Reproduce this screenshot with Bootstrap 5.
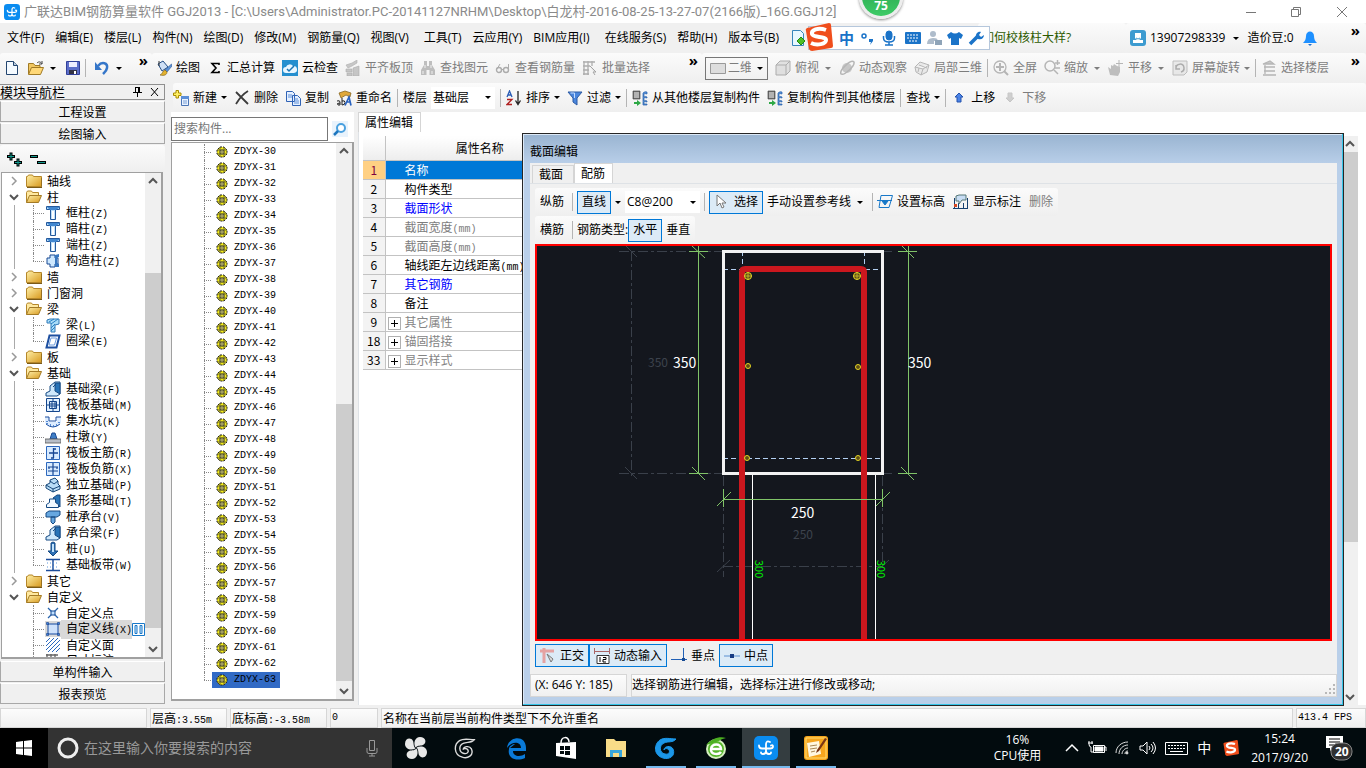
<!DOCTYPE html>
<html lang="zh-CN">
<head>
<meta charset="utf-8">
<meta name="viewport" content="width=device-width, initial-scale=1">
<title>广联达BIM钢筋算量软件 GGJ2013</title>
<link href="https://cdn.jsdelivr.net/npm/bootstrap@5.3.0/dist/css/bootstrap.min.css" rel="stylesheet">
<style>
:root{--ui:"Open Sans","Noto Sans CJK SC",sans-serif;--song:"Noto Sans CJK SC","Liberation Sans",sans-serif;--mono:"Liberation Mono","Noto Sans CJK SC",monospace}
body{font:12px/16px var(--ui);color:#000;background:#f0f0f0;height:100vh;min-height:600px;overflow:hidden}
button,input,select{font:inherit;color:inherit}
a{color:inherit;text-decoration:none}
svg{flex:none;display:block}
.ico{width:16px;height:16px}
.titlebar{height:23px;background:#fff;color:#8a8a8a;font:13px/22px Roboto,"Noto Sans CJK SC",sans-serif}
.menubar,.toolrow{height:30px}
.menubar{padding-left:7px;gap:11px}
.strip{background:linear-gradient(#fbfbfb,#efefef);border-radius:3px}
.tool{display:inline-flex;align-items:center;gap:4px;padding:0;border:0;background:none;white-space:nowrap;flex:none}
.tool:disabled,.dim{color:#7d7d7d}
.tool:disabled svg{filter:grayscale(1);opacity:.5}
.drop-mark{width:0;height:0;border:3px solid transparent;border-top-color:currentColor;border-bottom:0;margin:0 1px 0 2px;flex:none}
.vsep{width:1px;height:18px;background:#b4b4b4;flex:none}
.tight .vsep{margin:0 -2px}
.more{font-size:15px;line-height:14px;font-weight:700;align-self:flex-start;padding:0 6px 0 0;border:0;background:none}
.pick{appearance:none;border:0;border-radius:0;height:22px;padding:0 16px 0 2px;line-height:20px;background:#fff url("data:image/svg+xml,%3Csvg xmlns='http://www.w3.org/2000/svg' width='6' height='3'%3E%3Cpath d='M0 0h6L3 3z'/%3E%3C/svg%3E") no-repeat right 4px center}
.view-box{border:1px solid #777;height:23px}
.view-box .pick{height:20px;width:41px;background-color:transparent}
.side{width:165px}
.side-head{height:16px;margin:1px 0;border:1px solid #8f8f8f;border-left:0;font:13px/14px var(--song)}
.side-btn{height:21px;margin-bottom:1px;border:1px solid #a8a8a8;border-top-color:#fff;background:#f0f0f0;font:12px/18px var(--song);padding:0;flex:none}
.sunken{background:#fff;border:2px solid #a0a0a0;border-top-width:1px;border-left-width:1px;min-height:0}
.nav-box{margin:0 2px 2px 1px}
.tree-row{height:16px;line-height:16px;font-family:var(--song);white-space:nowrap;position:relative}
.tree-row .key{font:10px/16px var(--mono)}
.tree-row .twist{width:10px;height:10px;margin-left:7px;margin-right:7px}
.tree-row.leaf{padding-left:31px}
.tree-row.leaf::before{content:"";width:11px;border-top:1px dotted #888;flex:none;margin-right:1px}
.tree-row.leaf::after{content:"";position:absolute;left:31px;top:0;bottom:0;border-left:1px dotted #888}
.tree-row.leaf.final::after{bottom:8px}
.tree-row.leaf.inner{background:linear-gradient(#aaa,#aaa) 12px 0/1px 100% no-repeat}
.tree-row .label{padding-left:5px}
.tree-row.current .label,.tree-row.current svg.ico{background:#d9d9d9}
.sbar{width:16px;background:#f0f0f0;flex:none}
.sbar button{height:16px;border:0;background:none;padding:0 3px;flex:none}
.sbar i{background:#cdcdcd}
.list-pane{width:185px}
.list-pane>*{margin-left:2px}
.code-list{padding-top:1px}
.code-row{height:16px;padding-left:32px;font:10px/16px var(--mono);white-space:nowrap;position:relative}
.code-row::before{content:"";width:7px;border-top:1px dotted #888;margin-right:1px;flex:none}
.code-row::after{content:"";position:absolute;left:32px;top:0;bottom:0;border-left:1px dotted #888}
.code-row:last-child::after{bottom:8px}
.code-row .pill{height:16px;padding:0 4px;gap:6px}
.code-row.current .pill{background:#316ac5}
.search-row{height:30px;padding:4px 0 1px}
.search-box{width:157px;height:24px;border:1px solid #777;background:#fff;padding:0 2px}
.search-box::placeholder{color:#777}
.sheet{font-family:var(--song);width:212px;table-layout:fixed;margin:0}
.sheet th,.sheet td{height:19px;padding:0;border:1px solid #c3c3c3;border-width:0 1px 1px 0;font-weight:400;line-height:18px;white-space:nowrap}
.sheet thead th{height:24px;background:linear-gradient(#fff,#ededed)}
.sheet tbody th{background:#f3f3f3}
.sheet td{padding-left:19px}
.sheet td .num{line-height:10px}
.sheet .linked{color:#00f}
.sheet .chosen td{background:#0078d7;color:#fff}
.sheet .chosen th{background:#ffd083;color:#800040}
.sheet .group{padding-left:2px;color:#848484}
.expander{width:13px;height:13px;border:1px solid #b0b0b0;background:#fff;padding:1px;margin-right:4px}
.page-tab{border:1px solid #d5d5d5;border-bottom:0;background:#fff;padding:0 7px 0 6px;height:20px;white-space:nowrap}
.page-tab.idle{background:#f0f0f0;height:18px;padding-right:10px}
.editor{left:353px;right:22px;top:50px;bottom:-1px;border:1px solid #262626;background:linear-gradient(#99b4d1,#b9cfe9 30px);padding:0 6px 8px 7px;box-shadow:inset -1px -1px #35c5e8,inset 1px 1px #dce9f7}
.editor-title{height:29px;padding:10px 0 0}
.editor-body{background:#f0f0f0;min-height:0}
.editor-work{padding:0 5px;min-height:0}
.editor-work .strip{height:28px;gap:4px;padding:0 5px}
.on{border:1px solid #0078d7;background:#dcebf7;height:23px;padding:0 4px}
.canvas{border:2px solid #f00;background:#14171e;min-height:0;overflow:hidden}
.canvas text{font-family:"Noto Sans CJK SC",sans-serif}
.cell{border:1px solid #d6d6d6;background:linear-gradient(#fcfcfc,#f0f0f0);white-space:nowrap;overflow:hidden}
.statusbar{height:23px;padding-top:3px;font-family:var(--song);gap:3px}
.statusbar .cell{padding:0 1px;line-height:18px}
.num{font:10px/18px var(--mono)}
.taskbar{height:40px;background:#020b0e;color:#fff}
.start{width:48px;background:#000;border:0;padding:0 16px}
.ask{width:344px;background:#333;padding:0 14px 0 9px;gap:5px}
.ask input{background:none;border:0;color:#999;font-size:14px;outline:0}
.ask input::placeholder{color:#999;opacity:1}
.apps{gap:2px}
.app{width:48px;border:0;background:none;padding:0 12px;position:relative}
.app.running::after{content:"";position:absolute;left:4px;right:4px;bottom:0;height:2px;background:#76b9ed}
.app.active{background:#343d40}
.app.active::after{left:0;right:0}
.tray{gap:8px}
.tray button{border:0;background:none;padding:0;color:#fff}
.ime{top:26px;left:808px;width:182px;height:24px;background:#fff;border:1px solid #b5c7dc;padding-left:30px;gap:5px;z-index:5;color:#1a73c8}
.ime-logo{left:-4px;top:-4px}
.ball{left:859px;top:-18px;width:44px;height:37px;border-radius:0 0 22px 22px;overflow:hidden;z-index:6;background:linear-gradient(#29a04c,#3dcb66);border:3px solid #ededed;border-top:0;box-shadow:0 1px 3px #888;color:#fff;font-weight:700;line-height:14px;padding-top:17px}
</style>
</head>
<body class="d-flex flex-column">

<svg width="0" height="0" class="position-absolute" aria-hidden="true">
<defs>
<linearGradient id="gold" x2="1" y2="1"><stop stop-color="#fff0a8"/><stop offset="1" stop-color="#d89a20"/></linearGradient>
<symbol id="brand" viewBox="0 0 24 24"><rect width="24" height="24" rx="5" fill="#0a8cf0"/><path d="M16 6q-3.500-2-4 2v7q0 3-3 3-2 0-2-1.500M12 15q0 3 3 3 2 0 2-1.500M5 9.500q0 3 3 3h8q3 0 3-2t-2-1" fill="none" stroke="#fff" stroke-width="1.800" stroke-linecap="round"/></symbol>
<symbol id="new" viewBox="0 0 16 16"><path d="M2.500 1.500h7l4 4v9h-11z" fill="#f4faff" stroke="#23456f"/><path d="M9.500 1.500v4h4" fill="#bcd" stroke="#23456f"/></symbol>
<symbol id="open" viewBox="0 0 16 16"><path d="M.5 14V3.500h5l1.500 2h5V8" fill="#f1c761" stroke="#a07a25"/><path d="M.5 14.500L3.500 7.500H15.500l-3 7z" fill="#ffd877" stroke="#a07a25"/><path d="M9 3c2-2 4-1 5 1m0-3v3h-3" fill="none" stroke="#444"/></symbol>
<symbol id="save" viewBox="0 0 16 16"><path d="M1.500 1.500h13v13h-13z" fill="#5c6ec9" stroke="#31409a"/><path d="M4 2h8v5H4z" fill="#eef"/><path d="M4 10h8v4H4z" fill="#334"/><path d="M9 11h2v3H9z" fill="#fff"/></symbol>
<symbol id="undo" viewBox="0 0 16 16"><path d="M4 6c4-5 10-3 9 2-.5 3-2 4-4 6" fill="none" stroke="#3576c9" stroke-width="2.500"/><path d="M1 2v8h7z" fill="#3576c9"/></symbol>
<symbol id="paint" viewBox="0 0 16 16"><path d="M2 4l5-3 5 6-6 4z" fill="#cfe0f5" stroke="#234d86"/><path d="M3 1v5" stroke="#333"/><path d="M15.500 4L9 10l2 2 5-6z" fill="#5a91d8" stroke="#29548e" stroke-width=".6"/><path d="M9 10c-3 1-2 4-5 5 4 1 7 0 7-3z" fill="#e4b32f" stroke="#7a5c15" stroke-width=".6"/></symbol>
<symbol id="sum" viewBox="0 0 12 16"><path d="M10 5V3.500H3L7 8l-4 4.500h7V11" fill="none" stroke="#000" stroke-width="1.600"/></symbol>
<symbol id="cloud" viewBox="0 0 16 16"><path d="M0 0h16v16H0z" fill="#258fcf"/><path d="M4 13a3 3 0 0 1 0-6 4 4 0 0 1 7-1 3.500 3.500 0 0 1 1 7z" fill="#e8f6ff"/><path d="M5 9l2 2 5-5" fill="none" stroke="#1b76b5" stroke-width="1.500"/></symbol>
<symbol id="slab" viewBox="0 0 16 16"><path d="M1 5l6-2 5-3v3l-5 3-4 2zM1 9h6v3H1zM2 13h5v3H2zM8 8l6-2v10H8z" fill="#999" stroke="#666" stroke-width=".6"/></symbol>
<symbol id="bino" viewBox="0 0 16 16"><path d="M4 1h3v5h2V1h3v4l3 5v5H9.500v-5h-3v5H1v-5l3-5z" fill="#888"/><path d="M3 11v3M5 5v3M11 5v3M12 11v3" stroke="#eee"/></symbol>
<symbol id="glass" viewBox="0 0 16 16"><circle cx="4" cy="10" r="2.500" fill="none" stroke="#666" stroke-width="1.400"/><circle cx="11" cy="10" r="2.500" fill="none" stroke="#666" stroke-width="1.400"/><path d="M2 9l3-5M13.500 10V4M6.500 9.500h2" stroke="#666" fill="none"/></symbol>
<symbol id="grid" viewBox="0 0 16 16"><path d="M1 2h12M1 6h7M1 10h6M1 14h6M2 1v14M6 1v14M10 1v5" stroke="#666" stroke-width="1.300"/><path d="M8 6l6 6h-3l2 3" fill="#ddd" stroke="#555"/></symbol>
<symbol id="rect" viewBox="0 0 16 16"><path d="M.5 3.500h15v10H.5z" fill="#ddd" stroke="#999"/></symbol>
<symbol id="cube" viewBox="0 0 16 16"><path d="M1 5l4-4h10v10l-4 4H1zM1 5h10v10M11 5l4-4" fill="#ccc" stroke="#666"/></symbol>
<symbol id="orbit" viewBox="0 0 16 16"><circle cx="8" cy="8" r="5" fill="#999"/><path d="M2 14C0 10 12-1 15 2 16 6 5 16 2 14z" fill="none" stroke="#777" stroke-width="1.500"/></symbol>
<symbol id="local" viewBox="0 0 16 16"><path d="M1 7l5-5 9 3-2 7-6 3-5-3zM1 7l8 2 6-4M9 9l-2 6M5 5l8 3M5 8l-1 4" fill="#ddd" stroke="#777"/></symbol>
<symbol id="full" viewBox="0 0 16 16"><circle cx="7" cy="7" r="6" fill="none" stroke="#777" stroke-width="1.300"/><path d="M7 3v8M3 7h8M11 11l4 4" stroke="#777" stroke-width="2"/></symbol>
<symbol id="zoomi" viewBox="0 0 16 16"><circle cx="6" cy="6" r="5" fill="none" stroke="#777" stroke-width="1.500"/><path d="M10 10l4 4M11 3h5M13.500 0v5M11 8h5" stroke="#777" stroke-width="1.500"/></symbol>
<symbol id="hand" viewBox="0 0 16 16"><path d="M2 15L0 7l3 2V5l2 1 1-2 3 2 3 1v5l-2 4z" fill="#888"/><path d="M11 0v7M8 3.500h7" stroke="#777"/></symbol>
<symbol id="spin" viewBox="0 0 16 16"><path d="M1 1h14v11l-3 3H1z" fill="#ddd" stroke="#888"/><path d="M4 8a4 4 0 1 1 5 4M4 5v4h4" fill="none" stroke="#666" stroke-width="1.500"/></symbol>
<symbol id="floor" viewBox="0 0 16 16"><path d="M2 4h11L9 1zM3 7h11M3 11h11M2 15h13M4 5v9" stroke="#777" fill="#999" stroke-width="1.300"/></symbol>
<symbol id="add" viewBox="0 0 16 16"><path d="M8.500 6.500h7v9h-7z" fill="#e9f2ff" stroke="#4a74b5"/><path d="M8 6h8v3H8z" fill="#5c8fd8"/><path d="M10 11h4M10 13h4" stroke="#7ba0d6"/><path d="M3 .5h2.500V3H8v2.500H5.500V8H3V5.500H.5V3H3z" fill="#fff066" stroke="#a98b00"/></symbol>
<symbol id="del" viewBox="0 0 16 16"><path d="M2 2l12 12M14 1C9 4 5 9 2 14" fill="none" stroke="#3b3b3b" stroke-width="1.800"/></symbol>
<symbol id="copy" viewBox="0 0 16 16"><path d="M1.500 1.500h6l2 2v8h-8zM7.500 5.500h5l3 3v7h-8z" fill="#e5f0ff" stroke="#2f62b5"/><path d="M3 5h4M3 7h4M9 9h4M9 11h5M9 13h5" stroke="#5f8fd8"/></symbol>
<symbol id="rename" viewBox="0 0 16 16"><path d="M3 3l6-2 6 2-1 4-4-2-5 3z" fill="#e0a83a" stroke="#7b5b18" stroke-width=".7"/><path d="M1 11q3-1 3 1v3H2q-2-2 2-2M6 8v7q3 0 3-2.500T6 11" stroke="#222" fill="none"/><path d="M9 15.500L13 7l2 8.500M11 12h3" stroke="#2a63c0" stroke-width="1.700" fill="none"/></symbol>
<symbol id="sort" viewBox="0 0 16 16"><path d="M1 7l2.500-6L6 7M2 5h3" stroke="#2a5cb5" fill="none" stroke-width="1.300"/><path d="M1 9.500h5l-5 5h5" stroke="#b02020" fill="none" stroke-width="1.300"/><path d="M12 1v12M9.500 10.500l2.500 4 2.500-4" stroke="#222" fill="none" stroke-width="1.300"/></symbol>
<symbol id="funnel" viewBox="0 0 16 16"><path d="M1 2h14L10 8v7l-4-3V8z" fill="#4a86dd" stroke="#2c5aa3"/><path d="M3.500 3h4v5" stroke="#c4dcff" fill="none"/></symbol>
<symbol id="floors" viewBox="0 0 16 16"><path d="M1 1h7v8H1z" fill="#777" stroke="#333" stroke-width=".6"/><path d="M2 3h5M2 5h5M2 7h5" stroke="#eee"/><path d="M11 3q2-2 4-1v2q-3-1-3 0v3q2-1 3 0v1q-3-1-3 0v3q2-1 3 0v1q-3-1-3 0v2h3v1h-4z" fill="#5c98e0" stroke="#235ba8" stroke-width=".7"/><path d="M2 12h3v-2l4 3-4 3v-2H2z" fill="#2da845"/></symbol>
<symbol id="up" viewBox="0 0 10 16"><path d="M5 3l4 4H7v5H3V7H1z" fill="#4b83e6" stroke="#2453ad"/></symbol>
<symbol id="down" viewBox="0 0 10 16"><path d="M5 12L1 8h2V3h4v5h2z" fill="#aaa" stroke="#999"/></symbol>
<symbol id="lens" viewBox="0 0 16 16"><path d="M0 0h16v16H0z" fill="#e9f3fc"/><circle cx="9" cy="7" r="4" fill="#fff" stroke="#49a0df" stroke-width="2"/><path d="M6 10l-4 4" stroke="#1d76bf" stroke-width="2.500"/></symbol>
<symbol id="user" viewBox="0 0 16 16"><rect width="16" height="16" rx="3" fill="#3d9bd0"/><path d="M5 3h6v5L9 10h4v3H3v-3h4L5 8z" fill="#fff"/><path d="M6 8q2 2 4 0" stroke="#3d9bd0" fill="none"/></symbol>
<symbol id="bell" viewBox="0 0 16 16"><path d="M1 13c2-2 3-4 3-7 0-6 8-6 8 0 0 3 1 5 3 7z" fill="#1e90ff"/><path d="M6 14h4l-2 2z" fill="#1e70d0"/></symbol>
<symbol id="tip" viewBox="0 0 16 16"><path d="M2.500.5h8l3 3v12h-11z" fill="#e8f7ff" stroke="#3785bb"/><path d="M11 7l4 4-4 4-4-4z" fill="#4fbf27" stroke="#248b0d"/></symbol>
<symbol id="folder" viewBox="0 0 16 16"><path d="M.5 3.500h1l1-1.500h4l1 1.500h8v10H.5z" fill="url(#gold)" stroke="#b5872a"/><path d="M1 14.500h15V5" fill="none" stroke="#7b5a17"/></symbol>
<symbol id="folder-open" viewBox="0 0 16 16"><path d="M.5 13.500V3.500l1-1.500h4l1 1.500h6V6" fill="#ffe9a0" stroke="#b5872a"/><path d="M.5 13.500l3-7h12l-3 7z" fill="url(#gold)" stroke="#a37a26"/></symbol>
<symbol id="column" viewBox="0 0 16 16"><path d="M1.500 1.500h13v3h-4v10h-5v-10h-4z" fill="#bfe0fb" stroke="#24599c"/><path d="M2 2h13l-4 3H5z" fill="#4187d0"/><path d="M8 6v8" stroke="#fff" stroke-width="2"/></symbol>
<symbol id="tie" viewBox="0 0 16 16"><path d="M5 2h5v3h3v6h-3v3H5v-3H2V5h3z" fill="#cde8ff" stroke="#1b4b93"/><path d="M10 2l4-1v3l-2 1v5l2 1v3h-4" fill="#3777c0"/></symbol>
<symbol id="beam" viewBox="0 0 16 16"><path d="M2 3l3-1h9v5l-4 1v7H6V6H2z" fill="#a9dcf8" stroke="#317ab8"/><path d="M4 5l5-3M6 7l7-5M6 11l4-4M6 14l4-4" stroke="#2c83c6"/></symbol>
<symbol id="ring" viewBox="0 0 16 16"><path d="M4.500 2.500h10l-3 12H1.500z" fill="#fff" stroke="#1d4fa0" stroke-width="2"/><path d="M6 5h5.500l-2 7H4z" fill="none" stroke="#6d9ce0"/></symbol>
<symbol id="footing" viewBox="0 0 16 16"><path d="M1 15v-3l4-2V5l5-4h5v12l-3 2z" fill="#cfe8fb" stroke="#164a83"/><path d="M10 2h5v11l-5-3zM8 6l3-3" fill="#2873b7" stroke="#164a83"/></symbol>
<symbol id="stripfoot" viewBox="0 0 16 16"><path d="M8 5l4-3h3v12l-3-3z" fill="#2873b7" stroke="#164a83"/><path d="M1.500 14.500v-3l3-2V6h6v3.500l3 2v3z" fill="#f0f8ff" stroke="#164a83"/></symbol>
<symbol id="raft" viewBox="0 0 16 16"><path d="M1.500 1.500h13v13h-13zM4.500 4.500h7v7h-7zM8 1v3M8 12v3M1 8h3M12 8h3M7 4v8M10 4v8M4 7h8M4 9h8" fill="#e0f0ff" stroke="#15468c"/></symbol>
<symbol id="pit" viewBox="0 0 16 16"><path d="M0 4h4v5h8V4h4v5q-1 5-8 5T0 9z" fill="#dcecff"/><path d="M0 4h4v4h7V4h5M1 11q7 6 14 0" fill="none" stroke="#1d4fa0"/><path d="M2 8v4M5 12h1M8 13h1M11 12h1M14 9v2" stroke="#2c6bc4" stroke-width="1.500" stroke-dasharray="1 1"/></symbol>
<symbol id="pier" viewBox="0 0 16 16"><path d="M7 4h3l2 6H5z" fill="#3e7dc4" stroke="#1b4b93"/><path d="M0 10h16v4H0z" fill="#b8bec7" stroke="#555" stroke-width=".8"/></symbol>
<symbol id="bars" viewBox="0 0 16 16"><path d="M1.500 1.500h13v13h-13z" fill="#d8ebff" stroke="#2d68bd"/><path d="M4 8h9M8.500 3v10M6 13h3M8 4h3" stroke="#164693" stroke-width="1.300"/></symbol>
<symbol id="bars2" viewBox="0 0 16 16"><path d="M1.500 1.500h13v13h-13z" fill="#d8ebff" stroke="#2d68bd"/><path d="M3 6h10M3 10h10M8 2v12M4 6v2M12 6v2" stroke="#164693" stroke-width="1.200"/></symbol>
<symbol id="iso" viewBox="0 0 16 16"><path d="M1 8l4-2V3l5-2 3 3v3l2 2v3l-7 3-7-4z" fill="#b8ddf7" stroke="#174779"/><path d="M1 8l7 4 7-3M8 12v3M5 4l4 3 4-3" stroke="#174779" fill="none"/></symbol>
<symbol id="cap" viewBox="0 0 16 16"><path d="M1 4l3-2h11v4l-3 2H1zM6 8h4v5l-2 2-2-2z" fill="#66a7e0" stroke="#164a83"/></symbol>
<symbol id="pile" viewBox="0 0 16 16"><path d="M6 2l2-1 2 1v8h3l-5 5-5-5h3z" fill="#2e70b5" stroke="#164a83"/><path d="M8 3v8" stroke="#c4e3fb" stroke-width="2"/></symbol>
<symbol id="strip" viewBox="0 0 16 16"><path d="M1 2.500h14M1 13.500h14M8 3v11" stroke="#1c4d9b" stroke-width="1.500"/><path d="M2 6h12M2 10h12" stroke="#5b95dd" stroke-dasharray="1 2"/></symbol>
<symbol id="dot" viewBox="0 0 16 16"><path d="M3 3l10 10M13 3L3 13" stroke="#2864ad" stroke-width="1.300"/><path d="M6 6h4v4H6z" fill="#bfe0ff" stroke="#164a93"/></symbol>
<symbol id="poly" viewBox="0 0 16 16"><path d="M3 3h10v10H3z" fill="#cfe2fb" stroke="#174ba0"/><path d="M1.500 1.500h2v2h-2zM12.500 1.500h2v2h-2zM1.500 12.500h2v2h-2zM12.500 12.500h2v2h-2z" fill="#3f7fe0" stroke="#123e86" stroke-width=".6"/></symbol>
<symbol id="hatch" viewBox="0 0 16 16"><path d="M1 5l4-4M1 9l8-8M1 13l12-12M3 15L15 3M7 15l8-8M11 15l4-4" stroke="#2968bf"/></symbol>
<symbol id="gear" viewBox="0 0 12 12"><path d="M4 1h4l3 3v4l-3 3H4L1 8V4z" fill="#f2ea1a" stroke="#222" stroke-dasharray="2 1"/><path d="M4 1v10M8 1v10M1 4h10M1 8h10" stroke="#333" stroke-width=".7"/><circle cx="6" cy="6" r="2" fill="#fff79a" stroke="#222" stroke-width=".8"/><circle cx="6" cy="6" r=".7"/></symbol>
<symbol id="chev-up" viewBox="0 0 10 10"><path d="M1 7l4-4 4 4" fill="none" stroke="#555" stroke-width="2"/></symbol>
<symbol id="chev-down" viewBox="0 0 10 10"><path d="M1 3l4 4 4-4" fill="none" stroke="#555" stroke-width="2"/></symbol>
<symbol id="chev-right" viewBox="0 0 10 10"><path d="M3 1l4 4-4 4" fill="none" stroke="#999" stroke-width="1.500"/></symbol>
<symbol id="sogou" viewBox="0 0 28 28"><path d="M2 5L24 0q2 0 2 2l2 21q0 2-2 2L7 28q-2 0-3-2L1 8q-1-2 1-3z" fill="#f04e1c"/><path d="M21 7C13 4 6 7 7 11s14 2 14 6-9 6-15 3" fill="none" stroke="#fff" stroke-width="4"/></symbol>
<symbol id="swirl" viewBox="0 0 24 24"><path d="M22 3c-3 4-8 2-12 4-5 2-5 10 1 11 4 1 6-3 3-5-2-1-4 0-4 1 0-4 7-5 9-1 3 7-4 11-10 9C-1 19 0 8 6 4c5-3 10-1 16-1z" fill="currentColor"/></symbol>
</defs>
</svg>

<header class="titlebar d-flex align-items-center flex-shrink-0 ps-1">
  <svg class="ico me-1"><use href="#brand"/></svg>
  <span class="text-nowrap">广联达BIM钢筋算量软件 GGJ2013 - [C:\Users\Administrator.PC-20141127NRHM\Desktop\白龙村-2016-08-25-13-27-07(2166版)_16G.GGJ12]</span>
  <svg class="ms-auto me-3" width="104" height="20" fill="none" stroke="#777"><path d="M0 10.500h10M45.500 7.500h7v7h-7zM47.500 7.500v-2h7v7h-2M91 5l10 10M101 5L91 15"/></svg>
</header>

<nav class="menubar d-flex align-items-center flex-shrink-0 text-nowrap" aria-label="主菜单">
  <a href="#">文件(F)</a><a href="#">编辑(E)</a><a href="#">楼层(L)</a><a href="#">构件(N)</a><a href="#">绘图(D)</a><a href="#">修改(M)</a><a href="#">钢筋量(Q)</a><a href="#">视图(V)</a><a href="#" class="ms-1">工具(T)</a><a href="#">云应用(Y)</a><a href="#">BIM应用(I)</a><a href="#" class="ms-1">在线服务(S)</a><a href="#">帮助(H)</a><a href="#">版本号(B)</a>
  <svg class="ico"><use href="#tip"/></svg>
  <div class="d-flex h-100 ms-auto">
    <div class="strip d-flex align-items-center h-100 ps-1" style="width:148px"><a href="#" style="color:#2c5a00">如何校核柱大样?</a></div>
    <div class="strip d-flex align-items-center h-100 ps-1" style="width:240px">
      <button class="tool"><svg class="ico"><use href="#user"/></svg>13907298339<span class="drop-mark mx-1"></span></button>
      <span class="ms-1 me-2">造价豆:0</span><svg class="ico"><use href="#bell"/></svg>
      <button class="more ms-auto">»</button>
    </div>
  </div>
</nav>

<div class="toolrow d-flex flex-shrink-0" role="toolbar">
  <div class="strip d-flex align-items-center h-100 ps-1 flex-shrink-0" style="width:152px">
    <button class="tool" aria-label="新建"><svg class="ico"><use href="#new"/></svg></button>
    <button class="tool ms-2" aria-label="打开"><svg class="ico"><use href="#open"/></svg><span class="drop-mark"></span></button>
    <button class="tool ms-2" aria-label="保存"><svg class="ico"><use href="#save"/></svg></button>
    <span class="vsep mx-1"></span>
    <button class="tool ms-1" aria-label="撤销"><svg class="ico"><use href="#undo"/></svg><span class="drop-mark"></span></button>
    <button class="more ms-auto pe-1">»</button>
  </div>
  <div class="strip d-flex align-items-center h-100 ps-1 flex-shrink-0" style="width:550px;gap:7px">
    <button class="tool"><svg class="ico"><use href="#paint"/></svg>绘图</button>
    <button class="tool"><svg class="ico"><use href="#sum"/></svg>汇总计算</button>
    <button class="tool"><svg class="ico"><use href="#cloud"/></svg>云检查</button>
    <button class="tool" disabled><svg class="ico"><use href="#slab"/></svg>平齐板顶</button>
    <button class="tool" disabled><svg class="ico"><use href="#bino"/></svg>查找图元</button>
    <button class="tool" disabled><svg class="ico"><use href="#glass"/></svg>查看钢筋量</button>
    <button class="tool" disabled><svg class="ico"><use href="#grid"/></svg>批量选择</button>
    <button class="more ms-auto pe-1">»</button>
  </div>
  <div class="strip tight d-flex align-items-center h-100 flex-grow-1 dim" style="gap:7px;padding-left:3px">
    <div class="view-box d-flex align-items-center ps-1"><svg class="ico"><use href="#rect"/></svg><select class="pick dim" aria-label="视图"><option>二维</option></select></div>
    <button class="tool" disabled><svg class="ico"><use href="#cube"/></svg>俯视<span class="drop-mark"></span></button>
    <button class="tool" disabled><svg class="ico"><use href="#orbit"/></svg>动态观察</button>
    <button class="tool" disabled><svg class="ico"><use href="#local"/></svg>局部三维</button>
    <span class="vsep"></span>
    <button class="tool" disabled><svg class="ico"><use href="#full"/></svg>全屏</button>
    <button class="tool" disabled><svg class="ico"><use href="#zoomi"/></svg>缩放<span class="drop-mark"></span></button>
    <button class="tool" disabled><svg class="ico"><use href="#hand"/></svg>平移<span class="drop-mark"></span></button>
    <button class="tool" disabled><svg class="ico"><use href="#spin"/></svg>屏幕旋转<span class="drop-mark m-0"></span></button>
    <span class="vsep"></span>
    <button class="tool" disabled><svg class="ico"><use href="#floor"/></svg>选择楼层</button>
    <button class="more ms-auto text-black">»</button>
  </div>
</div>

<div class="d-flex flex-grow-1" style="min-height:0">
  <aside class="side d-flex flex-column flex-shrink-0">
    <div class="side-head d-flex align-items-center flex-shrink-0"><span>模块导航栏</span>
      <svg class="ms-auto me-1" width="28" height="12" fill="none" stroke="#000"><path d="M3 1.500h5M3.500 1v5M7.500 1v5M6.500 1v5M1 6.500h9M5.500 7v4M19 2l7 8M26 2l-7 8"/></svg></div>
    <button class="side-btn">工程设置</button>
    <button class="side-btn">绘图输入</button>
    <div class="strip ps-1 pt-1 flex-shrink-0" style="height:27px"><svg width="44" height="20" fill="none"><path d="M3 7.500h8M7 3.500v8M10 13.500h8M14 9.500v8M26 7.500h8M33 13.500h9" stroke="#000" stroke-width="3"/><path d="M4 7.500h6M7 4.500v6M11 13.500h6M14 10.500v6M27 7.500h6M34 13.500h7" stroke="#12998d"/></svg></div>
    <div class="sunken nav-box d-flex flex-grow-1">
      <ul id="navTree" class="list-unstyled m-0 flex-grow-1 overflow-hidden ps-0"></ul>
      <div class="sbar d-flex flex-column"><button aria-label="上"><svg width="10" height="10"><use href="#chev-up"/></svg></button><span style="flex:84"></span><i style="flex:355"></i><span style="flex:13"></span><button aria-label="下"><svg width="10" height="10"><use href="#chev-down"/></svg></button></div>
    </div>
    <button class="side-btn">单构件输入</button>
    <button class="side-btn">报表预览</button>
  </aside>

  <main class="d-flex flex-column flex-grow-1 position-relative ms-1" style="min-width:0">
    <div class="strip tight toolrow d-flex align-items-center flex-shrink-0 ms-1" style="height:29px;gap:7px" role="toolbar">
      <button class="tool"><svg class="ico"><use href="#add"/></svg>新建<span class="drop-mark m-0"></span></button>
      <button class="tool"><svg class="ico"><use href="#del"/></svg>删除</button>
      <button class="tool"><svg class="ico"><use href="#copy"/></svg>复制</button>
      <button class="tool"><svg class="ico"><use href="#rename"/></svg>重命名</button>
      <span class="vsep"></span>
      <label class="d-flex align-items-center gap-1">楼层<select class="pick" style="width:64px"><option>基础层</option></select></label>
      <span class="vsep"></span>
      <button class="tool"><svg class="ico"><use href="#sort"/></svg>排序<span class="drop-mark m-0"></span></button>
      <button class="tool"><svg class="ico"><use href="#funnel"/></svg>过滤<span class="drop-mark m-0"></span></button>
      <span class="vsep"></span>
      <button class="tool"><svg class="ico"><use href="#floors"/></svg>从其他楼层复制构件</button>
      <button class="tool"><svg class="ico"><use href="#floors"/></svg>复制构件到其他楼层</button>
      <span class="vsep"></span>
      <button class="tool">查找<span class="drop-mark m-0"></span></button>
      <span class="vsep"></span>
      <button class="tool"><svg class="ico"><use href="#up"/></svg>上移</button>
      <button class="tool" disabled><svg class="ico"><use href="#down"/></svg>下移</button>
    </div>
    <div class="d-flex flex-grow-1" style="min-height:0">
      <section class="list-pane d-flex flex-column flex-shrink-0 pb-1">
        <div class="search-row d-flex align-items-center gap-1 bg-white flex-shrink-0"><input class="search-box" placeholder="搜索构件..." aria-label="搜索构件"><svg class="ico"><use href="#lens"/></svg></div>
        <div class="sunken d-flex flex-grow-1"><div class="code-list flex-grow-1 overflow-hidden" id="codes"></div>
          <div class="sbar d-flex flex-column"><button aria-label="上"><svg width="10" height="10"><use href="#chev-up"/></svg></button><span style="flex:247"></span><i style="flex:279"></i><span style="flex:2"></span><button aria-label="下"><svg width="10" height="10"><use href="#chev-down"/></svg></button></div></div>
      </section>
      <section class="d-flex flex-column flex-grow-1 ps-1">
        <div class="flex-shrink-0 bg-white"><button class="page-tab">属性编辑</button></div>
        <div class="bg-white flex-grow-1 d-flex justify-content-between ps-1 pt-1 border-start" style="min-height:0">
          <div class="overflow-hidden"><table class="sheet"><colgroup><col style="width:22px"><col></colgroup>
            <thead><tr><th></th><th scope="col" class="text-center">属性名称</th></tr></thead>
            <tbody class="align-middle" id="props"></tbody></table></div>
          <div class="sbar d-flex flex-column me-2"><button aria-label="上"><svg width="10" height="10"><use href="#chev-up"/></svg></button><i style="flex:385"></i><span style="flex:145"></span><button aria-label="下"><svg width="10" height="10"><use href="#chev-down"/></svg></button></div>
        </div>
      </section>
    </div>

    <section class="editor position-absolute d-flex flex-column" role="dialog" aria-label="截面编辑">
      <div class="editor-title flex-shrink-0">截面编辑</div>
      <div class="editor-body d-flex flex-column flex-grow-1">
        <div class="d-flex align-items-end border-bottom flex-shrink-0" style="height:21px;padding-left:2px"><button class="page-tab idle">截面</button><button class="page-tab">配筋</button></div>
        <div class="editor-work flex-grow-1 d-flex flex-column">
          <div class="d-flex pt-1"><div class="strip d-flex align-items-center">
            <span class="me-1">纵筋</span><span class="vsep"></span>
            <button class="tool on">直线</button><span class="drop-mark m-0"></span>
            <select class="pick" style="width:75px" aria-label="钢筋"><option>C8@200</option></select><span class="vsep"></span>
            <button class="tool on"><svg class="ico"><path d="M3 1v11l3-3 2 5 2-1-2-4h4z" fill="#fff" stroke="#777"/></svg>选择</button>
            <button class="tool">手动设置参考线<span class="drop-mark"></span></button><span class="vsep ms-1"></span>
            <button class="tool"><svg class="ico" fill="none" stroke="#1878c8"><path d="M4 1.500h11.500L12 13.500H2zM0 6.500h15"/><path d="M5 7h6l-3 4z" fill="#1878c8"/></svg>设置标高</button>
            <button class="tool ms-1"><svg class="ico"><path d="M1.500 15V4M5.500 15V9M10.500 15V9M14.500 15V4M0 14.500h15" stroke="#16406f"/><path d="M3 2l3-1h7v5H9l-3 4V7H3z" fill="#c8ddf4" stroke="#577"/><path d="M1 10h3v3H1z" fill="#d54a25"/></svg>显示标注</button>
            <button class="tool dim ms-1">删除</button>
          </div></div>
          <div class="d-flex"><div class="strip d-flex align-items-center"><span class="me-1">横筋</span><span class="vsep"></span><div class="d-flex align-items-center"><span>钢筋类型:</span><button class="tool on">水平</button></div><button class="tool">垂直</button></div></div>
          <div class="canvas flex-grow-1">
            <svg width="100%" height="100%"><g transform="translate(-537 -246)" fill="none">
              <g stroke="#3a404a" stroke-dasharray="10 3 3 3"><path d="M619 251.500H723M619 473.500H723M631.500 251V479M723.500 476V577M882.500 476V570M723 566.500H882"/></g>
              <g stroke="#3a404a"><path d="M626 246l11 11M625 467l12 12M717 572l13-12M876 572l13-12M883 251.500h9M883 473.500h9"/></g>
              <g stroke="#b4d0f2" stroke-dasharray="5 3"><path d="M723 269.500H742M865 269.500H883M742.500 251V267M864.500 251V267M723 458.500H883"/></g>
              <path d="M723.500 251.500h159v222h-159z" stroke="#f2f2f2" stroke-width="3"/>
              <path d="M752.500 475V640M875.500 475V640" stroke="#fff"/>
              <path d="M742 640V272q0-3 3-3H861q3 0 3 3V640" stroke="#cb171e" stroke-width="6"/>
              <g stroke="#80c468"><path d="M698.500 246V474M689 251.500h19M689 473.500h19M692 246l13 12M692 467l13 13M908.500 246V474M898 251.500h19M898 473.500h19M901 245l13 13M901 467l13 13M723 499.500H883M723.500 489v18M882.500 489v18M717 506l14-14M876 506l14-14"/></g>
              <g stroke="#e5d722" fill="#5d4c18"><circle cx="748" cy="276" r="3.500"/><circle cx="857" cy="276" r="3.500"/><circle cx="748" cy="366" r="2.500"/><circle cx="858" cy="367" r="2.500"/><circle cx="747" cy="458" r="2.500"/><circle cx="858" cy="458" r="2.500"/></g>
              <g stroke="#dfd52b"><path d="M744 276h8M748 272v8M853 276h8M857 272v8" stroke-width=".7"/></g>
              <g fill="#fff" font-size="14"><text x="673" y="368">350</text><text x="908" y="368">350</text><text x="791" y="518">250</text></g>
              <g fill="#3d434d" font-size="12"><text x="648" y="367">350</text><text x="793" y="539">250</text></g>
              <g fill="#00f000" font-size="11"><text transform="translate(755 560) rotate(90)">300</text><text transform="translate(877 560) rotate(90)">300</text></g>
            </g></svg>
          </div>
          <div class="d-flex align-items-center flex-shrink-0" style="height:29px">
            <button class="tool on"><svg class="ico"><path d="M0 3h14M4 0v15" stroke="#e5a2a2" stroke-width="3"/><path d="M7 6l6 5-2 3z" fill="#ddd" stroke="#777"/></svg>正交</button>
            <button class="tool on"><svg class="ico" fill="none"><path d="M0 3.500h16M.5 0v6M15.500 0v6" stroke="#a66"/><path d="M3 7.500h12v8H3z" fill="#fff" stroke="#333"/><path d="M6 9v5M9 9.500h3v2H9v2.500h3" stroke="#000"/></svg>动态输入</button>
            <button class="tool ms-1"><svg class="ico"><path d="M0 11.500h16M12.500 0v13" stroke="#2160b5"/><path d="M11 10h3v3h-3z" fill="#164a93"/></svg>垂点</button>
            <button class="tool on ms-1"><svg class="ico"><path d="M0 8h16" stroke="#5b90d0"/><path d="M6 6h4v4H6z" fill="#163c84"/></svg>中点</button>
          </div>
        </div>
        <div class="d-flex flex-shrink-0 gap-1" style="height:23px;margin-top:4px;line-height:20px"><span class="cell ps-1" style="width:97px">(X: 646 Y: 185)</span>
          <span class="cell flex-grow-1 d-flex justify-content-between"><span>选择钢筋进行编辑，选择标注进行修改或移动;</span><svg class="align-self-end" width="12" height="12" fill="#b8b8b8"><path d="M9 0h2v2H9zM5 4h2v2H5zM9 4h2v2H9zM1 8h2v2H1zM5 8h2v2H5zM9 8h2v2H9z"/></svg></span></div>
      </div>
    </section>
  </main>
</div>

<footer class="statusbar d-flex flex-shrink-0">
  <span class="cell" style="width:147px"></span><span class="cell" style="width:77px">层高<span class="num">:3.55m</span></span><span class="cell" style="width:97px">底标高<span class="num">:-3.58m</span></span><span class="cell num" style="width:48px">0</span><span class="cell flex-grow-1">名称在当前层当前构件类型下不允许重名</span><span class="cell num" style="width:70px">413.4 FPS</span>
</footer>

<div class="taskbar d-flex flex-shrink-0">
  <button class="start" aria-label="开始"><svg width="16" height="16" fill="#fff"><path d="M0 2l7-1v6.500H0zM8 1l8-1v7.500H8zM0 8.500h7V15l-7-1zM8 8.500h8V16l-8-1z"/></svg></button>
  <div class="ask d-flex align-items-center"><svg width="22" height="22"><circle cx="11" cy="11" r="9" fill="none" stroke="#eee" stroke-width="3"/></svg><input class="flex-grow-1 p-0" placeholder="在这里输入你要搜索的内容" aria-label="搜索"><svg width="12" height="18" fill="none" stroke="#999"><path d="M3.500 1.500h5v10h-5zM1 9v4q0 1.500 2 1.500h6q2 0 2-1.500V9M6 15v2M3 17h6"/></svg></div>
  <div class="apps d-flex">
    <button class="app" aria-label="助手"><svg width="24" height="24" fill="#e8e8e8"><path d="M11.500 11.500C9 7 11 1 16 1c6 0 7 6 3 8-2 1-5 0-7.500 2.500zM12.500 11.500c4.500-2.500 10.500-.5 10.500 4.500 0 6-6 7-8 3-1-2 0-5-2.500-7.500zM12.500 12.500c2.500 4.500.5 10.500-4.500 10.500-6 0-7-6-3-8 2-1 5 0 7.500-2.500zM11.500 12.500C7 15 1 13 1 8c0-6 6-7 8-3 1 2 0 5 2.500 7.500z"/></svg></button>
    <button class="app" aria-label="G"><svg width="22" height="22" color="#020b0e" stroke="#ddd" stroke-width="1.500"><use href="#swirl"/></svg></button>
    <button class="app" aria-label="Edge"><svg width="24" height="24"><path d="M6 12h11c0-7-10-7-14 0C4 0 22-2 22 12v3H9c0 6 8 6 12 3v4C12 26 3 22 5 13c0-3 4-5 6-5" fill="#0a7ad8"/></svg></button>
    <button class="app" aria-label="商店"><svg width="24" height="24"><path d="M2 7l20-1v17L2 20z" fill="#fff"/><path d="M7 7c0-7 8-7 8-1" fill="none" stroke="#fff" stroke-width="1.500"/><path d="M6 10h4v4H6zM11 10h5v4h-5zM6 15h4v3H6zM11 15h5v4h-5z" fill="#020b0e"/></svg></button>
    <button class="app" aria-label="文件"><svg width="24" height="24"><path d="M2 3h8l2 2h10v16H2z" fill="#f8dc88"/><path d="M6 21v-7h12v7h-3v-4H9v4z" fill="#38a6dc"/></svg></button>
    <button class="app running" aria-label="G"><svg width="24" height="24" color="#1b97e8" stroke="#1b97e8"><use href="#swirl"/></svg></button>
    <button class="app running" aria-label="浏览器"><svg width="24" height="24"><circle cx="12" cy="13" r="9" fill="#56b62b" stroke="#d5f0c0" stroke-width="2"/><path d="M7 13h10c0-6-9-6-10 0s8 6 10 3" fill="none" stroke="#fff" stroke-width="2.500"/><path d="M2 9C8 2 16 0 22 2q-5 1-7 3" fill="#4cae22"/></svg></button>
    <button class="app running active" aria-label="广联达"><svg width="24" height="24"><use href="#brand"/></svg></button>
    <button class="app running" aria-label="便笺"><svg width="24" height="24"><rect width="24" height="24" rx="3" fill="#f6a51d"/><path d="M2 2h20v20H2z" fill="none" stroke="#ffdc70"/><path d="M3 7l12-2 2 13-12 3z" fill="#fff7e0"/><path d="M6 10l7-1M6 13l7-1M7 16l4-1" stroke="#a85"/><path d="M21 2l-8 12-1 3 3-2 8-12z" fill="#7b3514"/></svg></button>
  </div>
  <div class="tray ms-auto d-flex align-items-center">
    <div class="text-center me-3">16%<br>CPU使用</div>
    <svg width="14" height="14" fill="none" stroke="#fff" stroke-width="1.500"><path d="M1 10l6-6 6 6"/></svg>
    <svg width="20" height="16" fill="none" stroke="#fff"><path d="M6.500 5.500h11v7h-11zM18 7h1v4M1 3h5M2 1v3q0 3 2 3v5h3M5 1v3"/><path d="M8 7h8v4H8z" fill="#fff"/></svg>
    <svg width="16" height="16" fill="none" stroke="#ddd"><path d="M1 13C1 7 6 2 13 2M4 14c0-5 4-9 9-9M7 14c0-3 3-6 6-6M10 14c0-2 1-3 3-3"/><circle cx="12" cy="13" r="1" fill="#fff"/></svg>
    <svg width="18" height="16" fill="none" stroke="#fff"><path d="M1 6h3l4-4v12l-4-4H1zM10 6q2 2 0 4M12 4q4 4 0 8M14 2q5 6 0 12"/></svg>
    <svg width="24" height="16" fill="none" stroke="#fff"><path d="M.5 2.500h22v12H.5z"/><path d="M3 5.500h18M3 8.500h18" stroke-dasharray="2 1"/><path d="M5 11.500h13"/></svg>
    <button aria-label="输入法" style="font-size:14px">中</button>
    <svg class="mx-1" width="16" height="16"><use href="#sogou"/></svg>
    <div class="text-center" style="line-height:19px">15:24<br>2017/9/20</div>
    <button class="position-relative mx-2" aria-label="通知"><svg width="34" height="30"><path d="M2 3h17v12h-9l-4 3v-3H2z" fill="#fff"/><path d="M5 6h11M5 9h11M5 12h7" stroke="#000"/><rect x="7" y="10" width="21" height="17" rx="8" fill="#303030" stroke="#888"/><text x="11" y="23" fill="#fff" font-size="12" font-weight="700">20</text></svg></button>
  </div>
</div>

<div class="ime position-absolute d-flex align-items-center" aria-label="输入法工具栏">
  <svg class="ime-logo position-absolute" width="28" height="28"><use href="#sogou"/></svg>
  <b style="font-size:15px">中</b>
  <svg width="18" height="18"><circle cx="5" cy="7" r="2" fill="none" stroke="currentColor" stroke-width="1.500"/><path d="M10 10h4v2l-3 4 1-3h-2z" fill="currentColor"/></svg>
  <svg width="14" height="18" fill="none" stroke="currentColor"><rect x="4" y="2" width="6" height="9" rx="3" fill="currentColor"/><path d="M1.500 7v2q0 4 5.500 4t5.500-4V7M7 13v3M3 16h8" stroke-width="1.500"/></svg>
  <svg class="ms-1" width="16" height="18"><rect y="3" width="16" height="12" rx="1" fill="currentColor"/><path d="M2 6h12M2 9h12M4 12h8" stroke="#fff" stroke-dasharray="2 1"/></svg>
  <svg width="16" height="18" fill="#aebccb"><circle cx="7" cy="5" r="3"/><path d="M1 15q0-6 6-6t4 3H8v3z"/><path d="M9 11h7v5H9z" fill="#8fa4b8"/></svg>
  <svg width="16" height="18" fill="currentColor"><path d="M4 3q4 3 8 0l4 3-2 4-2-1v7H4V9l-2 1-2-4z"/></svg>
  <svg width="16" height="18"><path d="M2 15l7-7" stroke="currentColor" stroke-width="3.500"/><path d="M8 9c-1-4 2-7 5-6l-2 3 2 2 3-2c0 3-3 6-8 3z" fill="currentColor"/></svg>
</div>
<div class="ball position-absolute text-center">75</div>

<script src="https://cdn.jsdelivr.net/npm/bootstrap@5.3.0/dist/js/bootstrap.bundle.min.js"></script>
<script>
// Each folder: [name, expanded, [[icon, label, key], ...]]
const folders = [
  ['轴线', false, []],
  ['柱', true, [['column','框柱','Z'],['column','暗柱','Z'],['column','端柱','Z'],['tie','构造柱','Z']]],
  ['墙', false, []], ['门窗洞', false, []],
  ['梁', true, [['beam','梁','L'],['ring','圈梁','E']]],
  ['板', false, []],
  ['基础', true, [['footing','基础梁','F'],['raft','筏板基础','M'],['pit','集水坑','K'],['pier','柱墩','Y'],['bars','筏板主筋','R'],['bars2','筏板负筋','X'],['iso','独立基础','P'],['stripfoot','条形基础','T'],['cap','桩承台','V'],['footing','承台梁','F'],['pile','桩','U'],['strip','基础板带','W']]],
  ['其它', false, []],
  ['自定义', true, [['dot','自定义点',''],['poly','自定义线','X'],['hatch','自定义面',''],['grid','尺寸标注','W']]]
];
const icon = (id, cls = 'ico') => `<svg class="${cls}"><use href="#${id}"/></svg>`;
document.getElementById('navTree').innerHTML = folders.map(([name, open, kids], f) =>
  `<li class="tree-row d-flex align-items-center">${icon(open ? 'chev-down' : 'chev-right', 'twist')}${icon(open ? 'folder-open' : 'folder')}<span class="label">${name}</span></li>` +
  kids.map(([id, text, key], k) =>
    `<li class="tree-row leaf d-flex align-items-center${f < folders.length - 1 ? ' inner' : ''}${k === kids.length - 1 ? ' final' : ''}${text === '自定义线' ? ' current' : ''}">${icon(id)}<span class="label">${text}${key ? `<span class="key">(${key})</span>` : ''}</span>${text === '自定义线' ? '<svg width="13" height="15"><path d="M.5 1.500h12v12H.5z" fill="#fff" stroke="#1878c8"/><path d="M3 3.500h2v8H3zM8 3.500h2v8H8z" fill="#cfe8ff" stroke="#1878c8"/></svg>' : ''}</li>`).join('')).join('');

let codes = '';
for (let n = 30; n <= 63; n++) codes += `<div class="code-row d-flex align-items-center${n === 63 ? ' current' : ''}"><span class="pill d-flex align-items-center"><svg width="12" height="12"><use href="#gear"/></svg>ZDYX-${n}</span></div>`;
document.getElementById('codes').innerHTML = codes;

const props = [[1,'名称',''],[2,'构件类型',''],[3,'截面形状','linked'],[4,'截面宽度|(mm)','dim'],[5,'截面高度|(mm)','dim'],[6,'轴线距左边线距离|(mm)',''],[7,'其它钢筋','linked'],[8,'备注',''],[9,'其它属性','group'],[18,'锚固搭接','group'],[33,'显示样式','group']];
document.getElementById('props').innerHTML = props.map(([n, t, c]) => {
  const [a, unit] = t.split('|');
  const box = '<svg class="expander d-inline-block align-middle" viewBox="0 0 9 9"><path d="M1 4.500h7M4.500 1v7" stroke="#000"/></svg>';
  return `<tr class="${n === 1 ? 'chosen' : ''}"><th scope="row" class="text-center">${n}</th><td class="${c}">${c === 'group' ? box : ''}${a}${unit ? `<span class="num">${unit}</span>` : ''}</td></tr>`;
}).join('');
</script>
</body>
</html>
